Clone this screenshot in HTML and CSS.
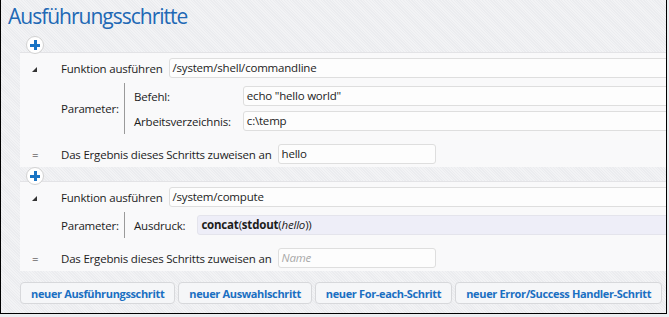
FILE: index.html
```html
<!DOCTYPE html>
<html lang="de">
<head>
    <meta charset="UTF-8">
    <title>Ausführungsschritte</title>
    <link rel="stylesheet" href="styles.css">
</head>
<body>
    <div class="frame">
        <h1 class="title">Ausführungsschritte</h1>

        <div class="add-row"><span class="add-btn"></span></div>

        <div class="step">
            <div class="row">
                <span class="marker"><span class="tri"></span></span>
                <span class="label">Funktion ausführen</span>
                <div class="field wide">/system/shell/commandline</div>
            </div>
            <div class="params">
                <span class="params-label">Parameter:</span>
                <div class="params-list">
                    <span class="plabel">Befehl:</span>
                    <div class="field wide">echo "hello world"</div>
                    <span class="plabel">Arbeitsverzeichnis:</span>
                    <div class="field wide">c:\temp</div>
                </div>
            </div>
            <div class="row result">
                <span class="marker">=</span>
                <span class="label">Das Ergebnis dieses Schritts zuweisen an</span>
                <div class="field short">hello</div>
            </div>
        </div>

        <div class="add-row between"><span class="add-btn"></span></div>

        <div class="step">
            <div class="row">
                <span class="marker"><span class="tri"></span></span>
                <span class="label">Funktion ausführen</span>
                <div class="field wide">/system/compute</div>
            </div>
            <div class="params">
                <span class="params-label">Parameter:</span>
                <div class="params-list">
                    <span class="plabel">Ausdruck:</span>
                    <div class="field wide expr"><b>concat</b>(<b>stdout</b>(<i>hello</i>))</div>
                </div>
            </div>
            <div class="row result">
                <span class="marker">=</span>
                <span class="label">Das Ergebnis dieses Schritts zuweisen an</span>
                <div class="field short placeholder">Name</div>
            </div>
        </div>

        <div class="actions">
            <button>neuer Ausführungsschritt</button>
            <button>neuer Auswahlschritt</button>
            <button>neuer For-each-Schritt</button>
            <button>neuer Error/Success Handler-Schritt</button>
        </div>
    </div>
</body>
</html>
```

FILE: styles.css
```css
* {
    margin: 0;
    padding: 0;
    box-sizing: border-box;
}
body {
    font-family: "Open Sans", "Noto Sans", sans-serif;
    font-size: 11.5px;
    letter-spacing: -0.2px;
    color: #1c1c1c;
    background: #ecedf0;
}
.frame {
    width: 667px;
    height: 314px;
    overflow: hidden;
    border: 1px solid #000;
    border-top: none;
    background-color: #ebecef;
    background-image: repeating-linear-gradient(45deg, rgba(255,255,255,0.35) 0 1px, transparent 1px 2px);
}
.title {
    font-weight: normal;
    font-size: 21px;
    line-height: 26px;
    color: #2168b5;
    padding: 3px 0 0 7px;
    letter-spacing: -1px;
}
.add-row {
    height: 23px;
    padding: 7px 0 0 25px;
}
.add-row.between {
    height: 14px;
    padding-top: 0;
}
.add-btn {
    display: block;
    width: 18px;
    height: 18px;
    border-radius: 50%;
    background: #fff;
    border: 1px solid #d2d2d2;
    position: relative;
}
.add-btn::before,
.add-btn::after {
    content: "";
    position: absolute;
    background: #1a74c4;
    left: 3px;
    top: 6.5px;
    width: 10px;
    height: 3px;
}
.add-btn::after {
    left: 6.5px;
    top: 3px;
    width: 3px;
    height: 10px;
}
.step {
    margin-left: 19px;
    background: #f9f9fa;
    border-top: 1px solid #e3e3e6;
    padding: 5px 0 3px 0;
}
.row {
    display: flex;
    align-items: center;
    height: 20px;
}
.marker {
    width: 41px;
    padding-left: 12px;
}
.tri {
    display: inline-block;
    width: 0;
    height: 0;
    border-left: 5px solid transparent;
    border-bottom: 5px solid #333;
    vertical-align: middle;
}
.label {
    margin-right: 6px;
    white-space: nowrap;
}
.field {
    height: 20px;
    line-height: 18px;
    border: 1px solid #dedede;
    border-radius: 3px;
    background: #fdfdfd;
    padding: 0 3px;
    white-space: nowrap;
}
.field.wide {
    flex: 1;
    margin-right: -4px;
}
.field.short {
    width: 158px;
}
.field.expr {
    background: #eeeef8;
    border-color: #e4e4ec;
}
.field.placeholder {
    color: #a8a8a8;
    font-style: italic;
}
.params {
    display: flex;
    align-items: center;
    margin: 5px 0 10px 0;
    padding-left: 41px;
}
.params-label {
    width: 63px;
}
.params-list {
    flex: 1;
    display: grid;
    grid-template-columns: auto 1fr;
    column-gap: 12px;
    row-gap: 5px;
    align-items: center;
    border-left: 1px solid #9a9a9a;
    padding: 3px 0 3px 9px;
}
.params-list .field {
    margin-right: -4px;
}
.actions {
    display: flex;
    gap: 3px;
    margin: 11px 0 0 19px;
}
.actions button {
    font-family: "Open Sans", "Noto Sans", sans-serif;
    font-size: 11px;
    font-weight: bold;
    letter-spacing: -0.35px;
    white-space: nowrap;
    color: #1a6fc2;
    height: 22px;
    padding: 0 10px;
    border: 1px solid #d7d8db;
    border-radius: 4px;
    background: #f5f6f8;
}
```
